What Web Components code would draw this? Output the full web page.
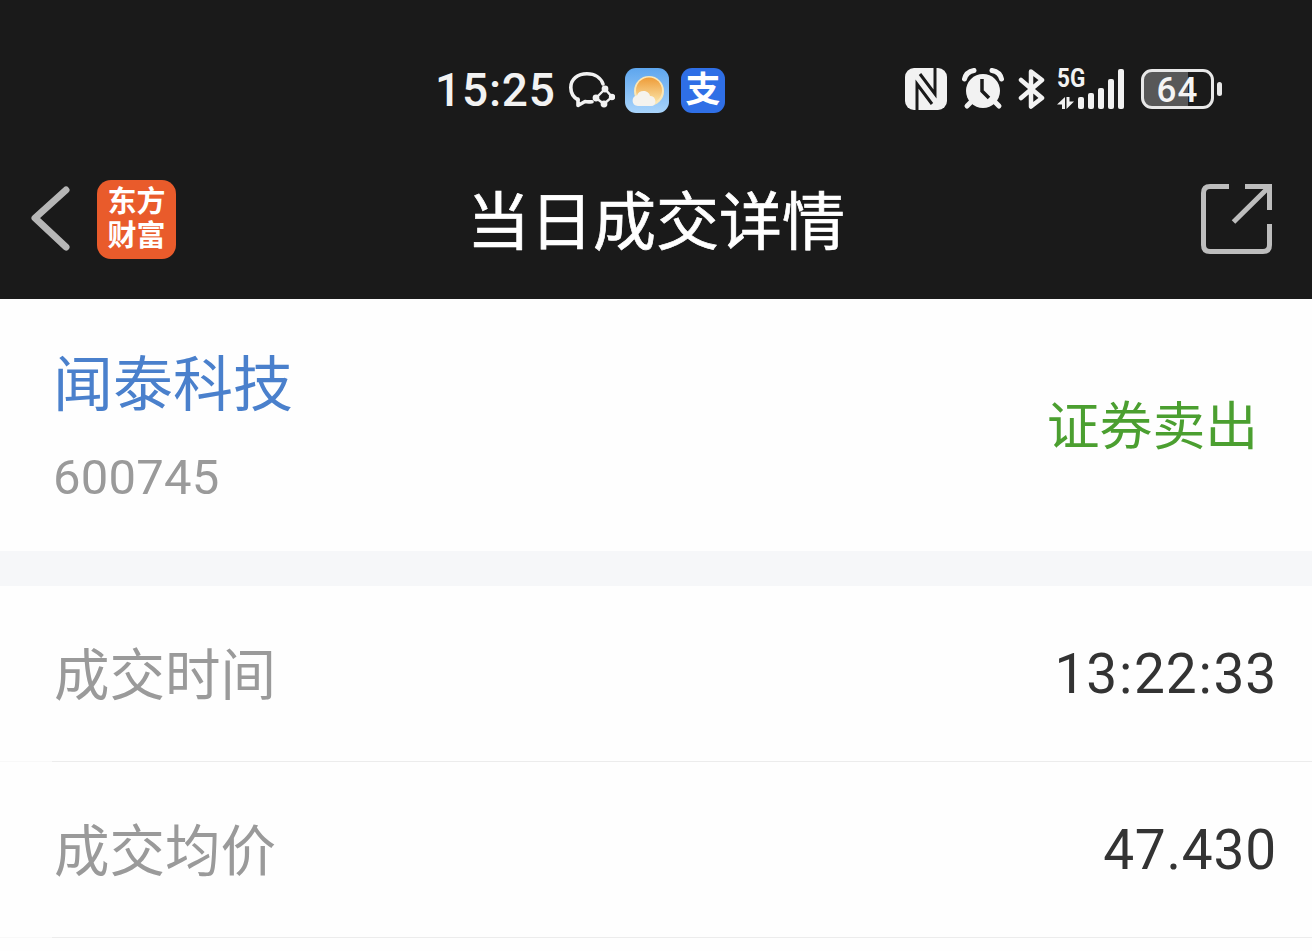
<!DOCTYPE html>
<html lang="zh-CN">
<head>
<meta charset="utf-8">
<title>当日成交详情</title>
<style>
  html, body { margin: 0; height: 100%; background: #fefefe; overflow: hidden; }
  body { font-family: Roboto, "Noto Sans CJK SC", sans-serif; }
</style>
</head>
<body>
<deal-page>
  <status-bar time="15:25" battery="64"></status-bar>
  <app-nav title-text="当日成交详情"></app-nav>
  <stock-head name="闻泰科技" code="600745" action="证券卖出"></stock-head>
  <deal-row label="成交时间" value="13:22:33"></deal-row>
  <deal-row label="成交均价" value="47.430"></deal-row>
</deal-page>

<script>
const CJK = 'Roboto, "Noto Sans CJK SC", sans-serif';

class DealPage extends HTMLElement {
  constructor() {
    super();
    this.attachShadow({ mode: 'open' });
    this.shadowRoot.innerHTML = `
      <style>
        :host { display: flex; flex-direction: column; width: 1312px; height: 951px; background: #fefefe; }
      </style>
      <slot></slot>
    `;
  }
}

class StatusBar extends HTMLElement {
  constructor() {
    super();
    this.attachShadow({ mode: 'open' });
  }

  connectedCallback() {
    const time = this.getAttribute('time') || '';
    const battery = this.getAttribute('battery') || '';
    this.shadowRoot.innerHTML = `
      <style>
        :host { display: flex; align-items: center; height: 120px; padding: 30px 0 0 435px; background: #1a1a1a; color: #f2f2f2; font-family: ${CJK}; }
        .time { font-size: 46px; font-weight: 500; line-height: 44px; letter-spacing: 0.8px; width: 134px; }
        .wechat { width: 46px; height: 36px; margin-right: 10px; }
        .tile { width: 44px; height: 45px; border-radius: 11px; margin-right: 12px; display: flex; align-items: center; justify-content: center; overflow: hidden; }
        .weather { background: linear-gradient(#5ea6ee, #a9d4fb); }
        .alipay { background: #2f6fe6; color: #fff; font-size: 35px; font-weight: 700; line-height: 45px; margin-right: 0; }
        .right { display: flex; align-items: center; margin-left: 180px; margin-bottom: 2px; }
        .signal { display: grid; grid-template-columns: 18px 50px; grid-template-rows: 20px 20px; width: 68px; height: 40px; margin-left: 11px; }
        .five { grid-column: 1; font-size: 25px; font-weight: 700; line-height: 20px; width: 30px; white-space: nowrap; transform: scaleX(.9); transform-origin: left; }
        .arrows { grid-column: 1; grid-row: 2; align-self: end; }
        .bars { grid-column: 2; grid-row: 1 / span 2; }
        .battery { width: 73px; height: 40px; box-sizing: border-box; margin-left: 16px; padding-top: 3px; border: 3px solid #e8e8e8; border-radius: 11px; background: linear-gradient(to right, #585858 44px, #1a1a1a 44px); display: flex; align-items: center; justify-content: center; font-size: 35px; font-weight: 500; line-height: 34px; letter-spacing: 1px; color: #f4f4f4; }
        .nub { width: 5px; height: 14px; margin-left: 3px; border-radius: 3px; background: #e8e8e8; }
      </style>
      <span class="time">${time}</span>
      <svg class="wechat" viewBox="0 0 46 36" fill="none">
        <path d="M9 28 C4 25 1.800 20 1.800 15.500 C1.800 7 9 1.800 18 1.800 C26 1.800 32 6 34 12" stroke="#f2f2f2" stroke-width="3.600" stroke-linecap="round"/>
        <path d="M9 27 L9 33.500 L16 29.500 C18 30 20 30 23 29.700" stroke="#f2f2f2" stroke-width="3.600" stroke-linecap="round" stroke-linejoin="round"/>
        <path d="M27 26 L36 17 L43 25 L35 32 Z" stroke="#f2f2f2" stroke-width="2.400"/>
        <circle cx="36" cy="17" r="3.400" fill="#f2f2f2"/><circle cx="27" cy="26" r="3.400" fill="#f2f2f2"/>
        <circle cx="43" cy="25" r="3.200" fill="#f2f2f2"/><circle cx="35" cy="32" r="3.400" fill="#f2f2f2"/>
      </svg>
      <span class="tile weather">
        <svg width="44" height="45" viewBox="0 0 44 45">
          <defs><linearGradient id="sun" x1="0" y1="0" x2="0" y2="1"><stop offset="0" stop-color="#ee9c38"/><stop offset="1" stop-color="#fbe6ac"/></linearGradient></defs>
          <circle cx="24" cy="23" r="15" fill="#fbe7b6"/>
          <circle cx="24" cy="22.500" r="13" fill="url(#sun)"/>
          <path d="M13 38 C6 38 6 28 12 27.500 C14 21 24 22 25 28 C31 27 33 38 26 38 Z" fill="#f5f3ee"/>
        </svg>
      </span>
      <span class="tile alipay">支</span>
      <div class="right">
        <svg width="42" height="42" viewBox="0 0 42 42">
          <rect width="42" height="42" rx="9" fill="#f2f2f2"/>
          <path d="M12 42 V16 L27 36" fill="none" stroke="#1a1a1a" stroke-width="3"/>
          <path d="M30 0 V26 L15 6" fill="none" stroke="#1a1a1a" stroke-width="3"/>
        </svg>
        <svg width="42" height="42" viewBox="0 0 42 42" style="margin-left:15px">
          <circle cx="21" cy="23" r="17" fill="#f2f2f2"/>
          <path d="M2.500 11 Q4 4 12 2.500 M39.500 11 Q38 4 30 2.500" fill="none" stroke="#f2f2f2" stroke-width="5" stroke-linecap="round"/>
          <path d="M9 34 L5 38 M33 34 L37 38" stroke="#f2f2f2" stroke-width="5" stroke-linecap="round"/>
          <path d="M20 11 L20 23 L27 30" fill="none" stroke="#1a1a1a" stroke-width="3.500"/>
        </svg>
        <svg width="28" height="42" viewBox="0 0 28 42" style="margin-left:14px" fill="none">
          <path d="M3 12 L24 30 L13 38.500 L13 3.500 L24 12 L3 30" stroke="#f2f2f2" stroke-width="4.500" stroke-linejoin="round" stroke-linecap="round"/>
        </svg>
        <div class="signal">
          <span class="five">5G</span>
          <svg class="arrows" width="17" height="12" viewBox="0 0 17 12">
            <path d="M8 0 L8 12 L5 12 L5 7.500 L0 7.500 Z M9.500 12 L9.500 0 L12.500 0 L12.500 4.500 L17 4.500 Z" fill="#f2f2f2"/>
          </svg>
          <svg class="bars" width="50" height="40" viewBox="0 0 50 40" fill="#f2f2f2">
            <rect x="3" y="28" width="6" height="12" rx="2"/>
            <rect x="13" y="24" width="6" height="16" rx="2"/>
            <rect x="23" y="19" width="6" height="21" rx="2"/>
            <rect x="33" y="10" width="6" height="30" rx="2"/>
            <rect x="43" y="0" width="6" height="40" rx="2"/>
          </svg>
        </div>
        <span class="battery">${battery}</span>
        <span class="nub"></span>
      </div>
    `;
  }
}

class AppNav extends HTMLElement {
  constructor() {
    super();
    this.attachShadow({ mode: 'open' });
  }

  connectedCallback() {
    const title = this.getAttribute('title-text') || '';
    this.shadowRoot.innerHTML = `
      <style>
        :host { display: grid; grid-template-columns: 1fr auto 1fr; align-items: center; height: 140px; padding: 0 39px 9px 30px; background: #1a1a1a; font-family: ${CJK}; }
        .left { display: flex; align-items: center; gap: 26px; margin-bottom: 2px; }
        .logo { width: 79px; height: 79px; border-radius: 14px; background: #e95b2b; color: #fff; font-size: 29px; font-weight: 700; line-height: 34px; display: flex; flex-direction: column; align-items: center; justify-content: center; }
        h1 { margin: 6px 0 0 9px; font-size: 63px; font-weight: 400; -webkit-text-stroke: 0.7px #fff; line-height: 80px; color: #fff; white-space: nowrap; }
        .share { justify-self: end; display: block; margin-bottom: 2px; }
      </style>
      <div class="left">
        <svg width="41" height="66" viewBox="0 0 41 66" fill="none">
          <path d="M36 4 L5 32 L36 61" stroke="#b6b6b6" stroke-width="7" stroke-linecap="round" stroke-linejoin="round"/>
        </svg>
        <div class="logo"><span>东方</span><span>财富</span></div>
      </div>
      <h1>${title}</h1>
      <svg class="share" width="72" height="72" viewBox="0 0 72 72" fill="none" stroke="#bdbdbd" stroke-width="5">
        <path d="M28 3.500 L9 3.500 Q2.500 3.500 2.500 10 L2.500 62 Q2.500 68.500 9 68.500 L62 68.500 Q68.500 68.500 68.500 62 L68.500 41"/>
        <path d="M44 3.500 L68.500 3.500 L68.500 27 M68 4 L32.500 39"/>
      </svg>
    `;
  }
}

class StockHead extends HTMLElement {
  constructor() {
    super();
    this.attachShadow({ mode: 'open' });
  }

  connectedCallback() {
    this.shadowRoot.innerHTML = `
      <style>
        :host { display: flex; justify-content: space-between; align-items: center; height: 252px; padding: 0 54px 0 54px; background: #fefefe; border-bottom: 35px solid #f6f7f9; font-family: ${CJK}; }
        .info { padding-top: 6px; }
        .name { font-size: 60px; line-height: 72px; color: #4a80cc; margin: 0 0 28px -1px; }
        .code { font-size: 49px; line-height: 56px; color: #9a9a9a; margin-left: -1px; letter-spacing: 0.2px; }
        .action { font-size: 52.800px; line-height: 64px; color: #4b9f30; margin-top: 4px; }
      </style>
      <div class="info">
        <div class="name">${this.getAttribute('name')}</div>
        <div class="code">${this.getAttribute('code')}</div>
      </div>
      <div class="action">${this.getAttribute('action')}</div>
    `;
  }
}

class DealRow extends HTMLElement {
  constructor() {
    super();
    this.attachShadow({ mode: 'open' });
  }

  connectedCallback() {
    // colons sit wider apart in the reference than Roboto sets them
    const value = (this.getAttribute('value') || '').replace(/:/g, '<span class="colon">:</span>');
    this.shadowRoot.innerHTML = `
      <style>
        :host { display: flex; justify-content: space-between; align-items: center; height: 176px; padding: 0 35px 0 54px; box-sizing: border-box; background: linear-gradient(to right, #f8f8f8 52px, #ececec 52px) bottom / 100% 1px no-repeat, #fefefe; font-family: ${CJK}; }
        .label { font-size: 55.500px; line-height: 70px; color: #9a9a9a; margin-top: 5px; }
        .value { font-size: 55px; line-height: 70px; letter-spacing: 0.8px; color: #333; }
        .colon { margin: 0 1px; }
      </style>
      <span class="label">${this.getAttribute('label')}</span>
      <span class="value">${value}</span>
    `;
  }
}

customElements.define('deal-page', DealPage);
customElements.define('status-bar', StatusBar);
customElements.define('app-nav', AppNav);
customElements.define('stock-head', StockHead);
customElements.define('deal-row', DealRow);
</script>
</body>
</html>
